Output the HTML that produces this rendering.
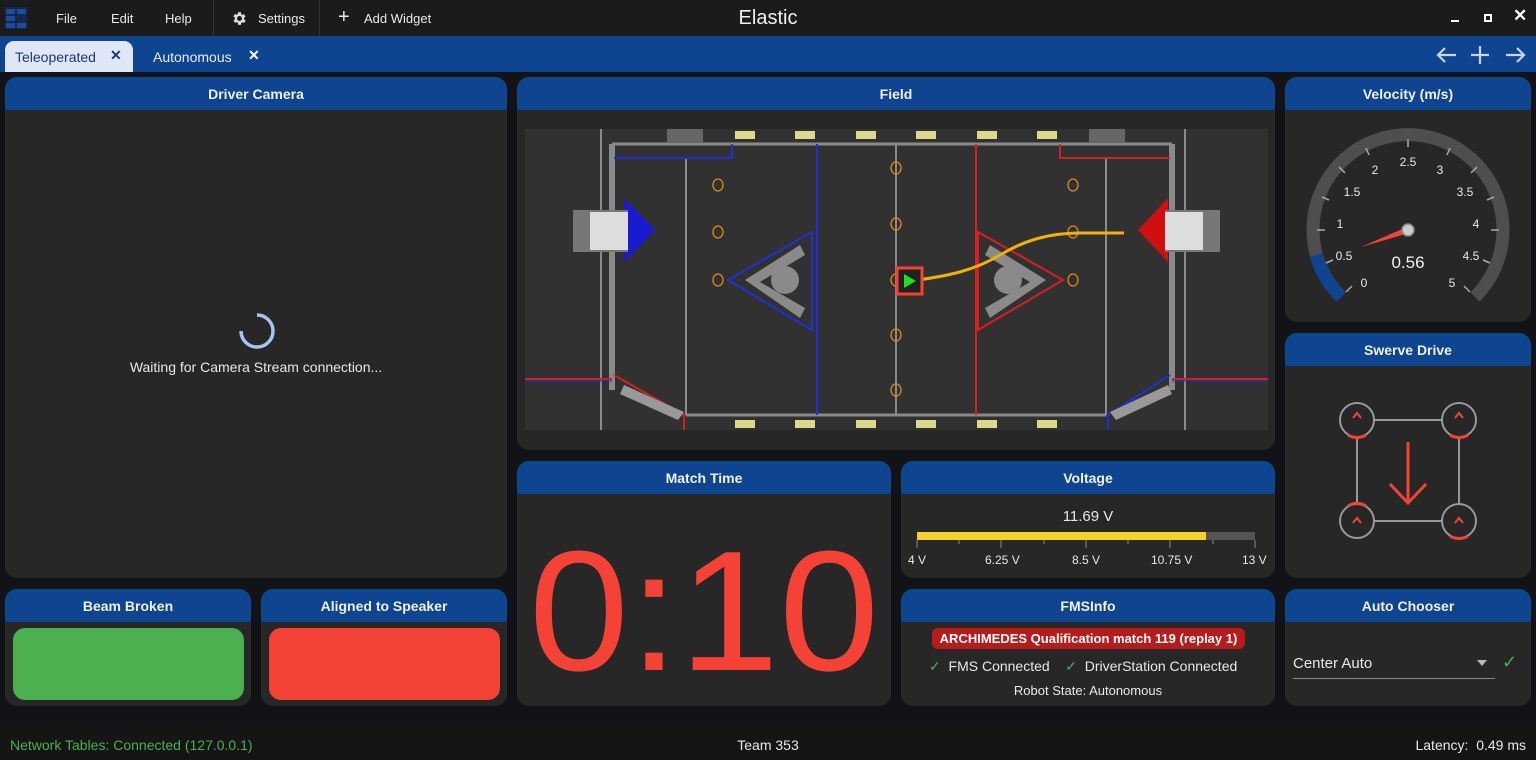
<!DOCTYPE html>
<html><head><meta charset="utf-8"><style>
*{margin:0;padding:0;box-sizing:border-box}
body{width:1536px;height:760px;background:#111317;font-family:"Liberation Sans",sans-serif;color:#e8e8e8;position:relative;overflow:hidden}
.abs{position:absolute}
.top{left:0;top:0;width:1536px;height:36px;background:#1b1b1b}
.tabs{left:0;top:36px;width:1536px;height:36px;background:#0e4490}
.card{position:absolute;background:#272727;border-radius:12px;overflow:hidden}
.hd{height:33px;background:#0e4490;color:#f0f0f0;font-weight:bold;font-size:14px;text-align:center;line-height:34px}
.menu{top:0;height:36px;line-height:37px;font-size:13px;color:#e8e8e8}
.status{left:0;top:727px;width:1536px;height:33px;background:#151515;font-size:14px;line-height:36px}
</style></head><body>
<div class="abs top"></div>
<svg class="abs" style="left:5px;top:7px" width="22" height="22" viewBox="0 0 22 22"><rect width="22" height="22" fill="#14284a"/><rect x="1" y="2" width="9" height="5" fill="#1c4aa0"/><rect x="12" y="2" width="9" height="5" fill="#1c4aa0"/><rect x="1" y="9" width="9" height="5" fill="#1c4aa0"/><rect x="1" y="16" width="9" height="5" fill="#1c4aa0"/><rect x="12" y="16" width="9" height="5" fill="#1c4aa0"/></svg>
<div class="abs menu" style="left:56px">File</div>
<div class="abs menu" style="left:111px">Edit</div>
<div class="abs menu" style="left:165px">Help</div>
<div class="abs" style="left:213px;top:0;width:1px;height:36px;background:#333"></div>
<svg class="abs" style="left:231px;top:10px" width="17" height="17" viewBox="0 0 24 24"><path fill="#ddd" d="M19.4 13a7.5 7.5 0 000-2l2.1-1.6-2-3.5-2.5 1a7.4 7.4 0 00-1.7-1L15 3h-4l-.4 2.7a7.4 7.4 0 00-1.7 1l-2.5-1-2 3.5L6.6 11a7.5 7.5 0 000 2l-2.1 1.6 2 3.5 2.5-1a7.4 7.4 0 001.7 1L11 21h4l.4-2.7a7.4 7.4 0 001.7-1l2.5 1 2-3.5zM13 15.5a3.5 3.5 0 110-7 3.5 3.5 0 010 7z" transform="translate(-1 0)"/></svg>
<div class="abs menu" style="left:258px">Settings</div>
<div class="abs" style="left:319px;top:0;width:1px;height:36px;background:#333"></div>
<div class="abs menu" style="left:338px;font-size:20px;line-height:35px">+</div>
<div class="abs menu" style="left:364px">Add Widget</div>
<div class="abs" style="left:0;width:1536px;top:7px;text-align:center;font-size:20px;color:#f0f0f0">Elastic</div>
<div class="abs" style="left:1451px;top:20px;width:8px;height:2px;background:#fff"></div>
<div class="abs" style="left:1484px;top:14px;width:8px;height:8px;border:2px solid #fff"></div>
<div class="abs" style="left:1513px;top:6px;font-size:17px;color:#fff;font-weight:bold">✕</div>
<div class="abs tabs"></div>
<div class="abs" style="left:5px;top:41px;width:128px;height:31px;background:#dfe7f7;border-radius:9px 9px 0 0"></div>
<div class="abs" style="left:15px;top:49px;font-size:14px;color:#1a3a70">Teleoperated</div>
<div class="abs" style="left:110px;top:47px;font-size:14px;color:#1a3a70;font-weight:bold">✕</div>
<div class="abs" style="left:153px;top:49px;font-size:14px;color:#e8eefa">Autonomous</div>
<div class="abs" style="left:248px;top:47px;font-size:14px;color:#fff;font-weight:bold">✕</div>
<svg class="abs" style="left:1436px;top:44px" width="92" height="22" viewBox="0 0 92 22" stroke="#c8d4ea" stroke-width="2.2" fill="none"><path d="M2 11h18M9 4l-7 7 7 7"/><path d="M44 2v18M35 11h18"/><path d="M70 11h18M81 4l7 7-7 7"/></svg>

<div class="card" style="left:5px;top:77px;width:502px;height:501px"><div class="hd">Driver Camera</div>
<svg class="abs" style="left:230px;top:232px" width="44" height="44" viewBox="0 0 44 44"><path d="M6 22A16 16 0 1 1 22 38" stroke="#a9c4f0" stroke-width="3.5" fill="none" transform="rotate(90 22 22)"/></svg>
<div class="abs" style="left:0;width:502px;top:282px;text-align:center;font-size:14px">Waiting for Camera Stream connection...</div></div>

<div class="card" style="left:517px;top:77px;width:758px;height:373px"><div class="hd">Field</div>
<svg class="abs" style="left:8px;top:52px" width="743" height="301" viewBox="525 129 743 301">
<rect x="525" y="129" width="743" height="301" fill="#313131"/>
<g stroke="#8a8a8a" stroke-width="2" fill="none">
<line x1="601" y1="129" x2="601" y2="430"/><line x1="1185" y1="129" x2="1185" y2="430"/>
<line x1="612" y1="144" x2="1172" y2="144" stroke-width="3"/><line x1="686" y1="415" x2="1106" y2="415" stroke-width="3"/>
<line x1="612" y1="144" x2="612" y2="390" stroke-width="6"/><line x1="1172" y1="144" x2="1172" y2="390" stroke-width="6"/>
<line x1="686" y1="158" x2="686" y2="415"/><line x1="1106" y1="158" x2="1106" y2="415"/>
<line x1="896" y1="144" x2="896" y2="415"/>
</g>
<line x1="817" y1="144" x2="817" y2="415" stroke="#1f2fd8" stroke-width="2"/>
<line x1="976" y1="144" x2="976" y2="415" stroke="#d81f1f" stroke-width="2"/>
<path d="M614 158H732V144" stroke="#1f2fd8" stroke-width="2" fill="none"/>
<path d="M1170 158H1060V144" stroke="#d81f1f" stroke-width="2" fill="none"/>
<path d="M614 375L684 415V430" stroke="#d81f1f" stroke-width="2" fill="none"/>
<path d="M1170 375L1108 415V430" stroke="#1f2fd8" stroke-width="2" fill="none"/>
<path d="M525 379H612M1172 379H1268" stroke="#d81f1f" stroke-width="2"/>
<path d="M525 381H612M1172 381H1268" stroke="#1f2fd8" stroke-width="1"/>
<g fill="#dada8a"><rect x="735" y="131" width="20" height="8"/><rect x="795" y="131" width="20" height="8"/><rect x="856" y="131" width="20" height="8"/><rect x="916" y="131" width="20" height="8"/><rect x="977" y="131" width="20" height="8"/><rect x="1037" y="131" width="20" height="8"/>
<rect x="735" y="420" width="20" height="8"/><rect x="795" y="420" width="20" height="8"/><rect x="856" y="420" width="20" height="8"/><rect x="916" y="420" width="20" height="8"/><rect x="977" y="420" width="20" height="8"/><rect x="1037" y="420" width="20" height="8"/></g>
<rect x="667" y="129" width="36" height="14" fill="#666"/><rect x="1089" y="129" width="36" height="14" fill="#666"/>
<polygon points="624,198 655,230 624,262" fill="#1a1ad0"/><polygon points="1168,198 1138,230 1168,262" fill="#d01010"/>
<rect x="573" y="210" width="55" height="42" fill="#777"/><rect x="590" y="212" width="38" height="38" fill="#ddd"/>
<rect x="1165" y="210" width="55" height="42" fill="#777"/><rect x="1165" y="212" width="38" height="38" fill="#ddd"/>
<path d="M624 385L684 412L678 420L620 394Z" fill="#999"/><path d="M1168 385L1110 412L1116 420L1172 394Z" fill="#999"/>
<polygon points="728,280 812,232 812,330" fill="none" stroke="#1f2fd8" stroke-width="2"/>
<polygon points="1063,280 978,232 978,330" fill="none" stroke="#d81f1f" stroke-width="2"/>
<g fill="#8a8a8a"><polygon points="745,280 800,245 805,255 760,282 805,308 800,318"/><polygon points="1046,280 990,245 985,255 1030,282 985,308 990,318"/><circle cx="785" cy="280" r="14"/><circle cx="1008" cy="280" r="14"/></g>
<g fill="none" stroke="#e08a1a" stroke-width="1.3"><ellipse cx="718" cy="185" rx="5" ry="6"/><ellipse cx="718" cy="232" rx="5" ry="6"/><ellipse cx="718" cy="280" rx="5" ry="6"/>
<ellipse cx="1073" cy="185" rx="5" ry="6"/><ellipse cx="1073" cy="232" rx="5" ry="6"/><ellipse cx="1073" cy="280" rx="5" ry="6"/>
<ellipse cx="896" cy="168" rx="5" ry="6"/><ellipse cx="896" cy="224" rx="5" ry="6"/><ellipse cx="896" cy="280" rx="5" ry="6"/><ellipse cx="896" cy="335" rx="5" ry="6"/><ellipse cx="896" cy="390" rx="5" ry="6"/></g>
<path d="M910 281C950 276 975 270 1000 255S1050 233 1080 233H1124" stroke="#f2b00d" stroke-width="3" fill="none"/>
<rect x="897" y="268" width="25" height="26" fill="#222" stroke="#f44336" stroke-width="3"/>
<polygon points="904,274 916,281 904,288" fill="#1ee01e"/>
</svg></div>

<div class="card" style="left:1285px;top:77px;width:246px;height:245px"><div class="hd">Velocity (m/s)</div></div>
<svg class="abs" style="left:1285px;top:110px" width="246" height="212" viewBox="1285 110 246 212">
<path d="M1341 297A95 95 0 1 1 1475 297" stroke="#4e4e4e" stroke-width="13" fill="none"/>
<path d="M1341 297A95 95 0 0 1 1316 255" stroke="#0e4490" stroke-width="13" fill="none"/>
<g stroke="#aaa" stroke-width="1.5">
<line x1="1346" y1="292" x2="1352" y2="286"/><line x1="1326" y1="263" x2="1333" y2="260"/><line x1="1317" y1="230" x2="1325" y2="230"/><line x1="1322" y1="197" x2="1329" y2="200"/><line x1="1339" y1="167" x2="1345" y2="173"/><line x1="1366" y1="148" x2="1369" y2="155"/><line x1="1408" y1="139" x2="1408" y2="147"/><line x1="1450" y1="148" x2="1447" y2="155"/><line x1="1477" y1="167" x2="1471" y2="173"/><line x1="1494" y1="197" x2="1487" y2="200"/><line x1="1499" y1="230" x2="1491" y2="230"/><line x1="1490" y1="263" x2="1483" y2="260"/><line x1="1470" y1="292" x2="1464" y2="286"/>
</g>
<g fill="#e8e8e8" font-size="12" text-anchor="middle"><text x="1364" y="287">0</text><text x="1344" y="260">0.5</text><text x="1340" y="228">1</text><text x="1352" y="196">1.5</text><text x="1375" y="174">2</text><text x="1408" y="166">2.5</text><text x="1440" y="174">3</text><text x="1465" y="196">3.5</text><text x="1476" y="228">4</text><text x="1471" y="260">4.5</text><text x="1452" y="287">5</text></g>
<text x="1408" y="268" fill="#f0f0f0" font-size="17" text-anchor="middle">0.56</text>
<polygon points="1361,247 1407,227 1409,233" fill="#f44336"/>
<circle cx="1408" cy="230" r="6" fill="#ccc" stroke="#888" stroke-width="1.5"/>
</svg>

<div class="card" style="left:1285px;top:333px;width:246px;height:245px"><div class="hd">Swerve Drive</div></div>
<svg class="abs" style="left:1285px;top:366px" width="246" height="212" viewBox="1285 366 246 212">
<g stroke="#999" stroke-width="2" fill="none"><path d="M1374 420H1442M1374 521H1442M1357 437V504M1459 437V504"/>
<circle cx="1357" cy="420" r="17"/><circle cx="1459" cy="420" r="17"/><circle cx="1357" cy="521" r="17"/><circle cx="1459" cy="521" r="17"/></g>
<g stroke="#f44336" stroke-width="3" fill="none"><path d="M1348 435A17 17 0 0 0 1366 435"/><path d="M1450 435A17 17 0 0 0 1468 435"/><path d="M1348 506A17 17 0 0 1 1366 506"/><path d="M1450 536A17 17 0 0 0 1468 536"/>
<path d="M1408 442V503M1390 484L1408 503L1426 484" stroke-width="3"/></g>
<g stroke="#f44336" stroke-width="2" fill="none"><path d="M1353 418L1357 413L1361 418"/><path d="M1455 418L1459 413L1463 418"/><path d="M1353 523L1357 518L1361 523"/><path d="M1455 523L1459 518L1463 523"/></g>
</svg>

<div class="card" style="left:517px;top:461px;width:374px;height:245px"><div class="hd">Match Time</div>
<div class="abs" style="left:0;width:374px;top:56px;text-align:center;font-size:180px;line-height:190px;color:#f44336;transform:scaleY(0.95)">0:10</div></div>

<div class="card" style="left:901px;top:461px;width:374px;height:117px"><div class="hd">Voltage</div>
<div class="abs" style="left:0;width:374px;top:47px;text-align:center;font-size:15px">11.69 V</div>
<div class="abs" style="left:16px;top:71px;width:338px;height:8px;background:#555"></div>
<div class="abs" style="left:16px;top:71px;width:289px;height:8px;background:#f5d12a"></div>
<svg class="abs" style="left:14px;top:79px" width="342" height="12"><g stroke="#888" stroke-width="1"><line x1="2" y1="0" x2="2" y2="8"/><line x1="44" y1="0" x2="44" y2="4"/><line x1="86" y1="0" x2="86" y2="8"/><line x1="129" y1="0" x2="129" y2="4"/><line x1="171" y1="0" x2="171" y2="8"/><line x1="213" y1="0" x2="213" y2="4"/><line x1="255" y1="0" x2="255" y2="8"/><line x1="298" y1="0" x2="298" y2="4"/><line x1="340" y1="0" x2="340" y2="8"/></g></svg>
<div class="abs" style="left:7px;top:92px;font-size:12px">4 V</div>
<div class="abs" style="left:84px;top:92px;font-size:12px">6.25 V</div>
<div class="abs" style="left:171px;top:92px;font-size:12px">8.5 V</div>
<div class="abs" style="left:250px;top:92px;font-size:12px">10.75 V</div>
<div class="abs" style="left:341px;top:92px;font-size:12px">13 V</div></div>

<div class="card" style="left:5px;top:589px;width:246px;height:117px"><div class="hd">Beam Broken</div>
<div class="abs" style="left:8px;top:39px;width:231px;height:72px;background:#4caf50;border-radius:12px"></div></div>
<div class="card" style="left:261px;top:589px;width:246px;height:117px"><div class="hd">Aligned to Speaker</div>
<div class="abs" style="left:8px;top:39px;width:231px;height:72px;background:#f44336;border-radius:12px"></div></div>

<div class="card" style="left:901px;top:589px;width:374px;height:117px"><div class="hd">FMSInfo</div>
<div class="abs" style="left:31px;top:39px;width:313px;height:21px;background:#b71c1c;border-radius:6px;color:#fff;font-weight:bold;font-size:13px;text-align:center;line-height:21px">ARCHIMEDES Qualification match 119 (replay 1)</div>
<div class="abs" style="left:28px;top:69px;font-size:14px"><span style="color:#4caf50">✓</span>&nbsp; FMS Connected&nbsp;&nbsp;&nbsp; <span style="color:#4caf50">✓</span>&nbsp; DriverStation Connected</div>
<div class="abs" style="left:0;width:374px;top:94px;text-align:center;font-size:13px">Robot State: Autonomous</div></div>

<div class="card" style="left:1285px;top:589px;width:246px;height:117px"><div class="hd">Auto Chooser</div>
<div class="abs" style="left:8px;top:66px;font-size:15px">Center Auto</div>
<div class="abs" style="left:8px;top:89px;width:202px;height:1px;background:#888"></div>
<div class="abs" style="left:192px;top:71px;width:0;height:0;border-left:5px solid transparent;border-right:5px solid transparent;border-top:6px solid #bbb"></div>
<div class="abs" style="left:217px;top:63px;font-size:18px;color:#4caf50">✓</div></div>

<div class="abs status"></div>
<div class="abs" style="left:10px;top:737px;font-size:14px;color:#4caf50">Network Tables: Connected (127.0.0.1)</div>
<div class="abs" style="left:0;width:1536px;top:737px;text-align:center;font-size:14px">Team 353</div>
<div class="abs" style="right:10px;top:737px;font-size:14px">Latency:&nbsp; 0.49 ms</div>
</body></html>
